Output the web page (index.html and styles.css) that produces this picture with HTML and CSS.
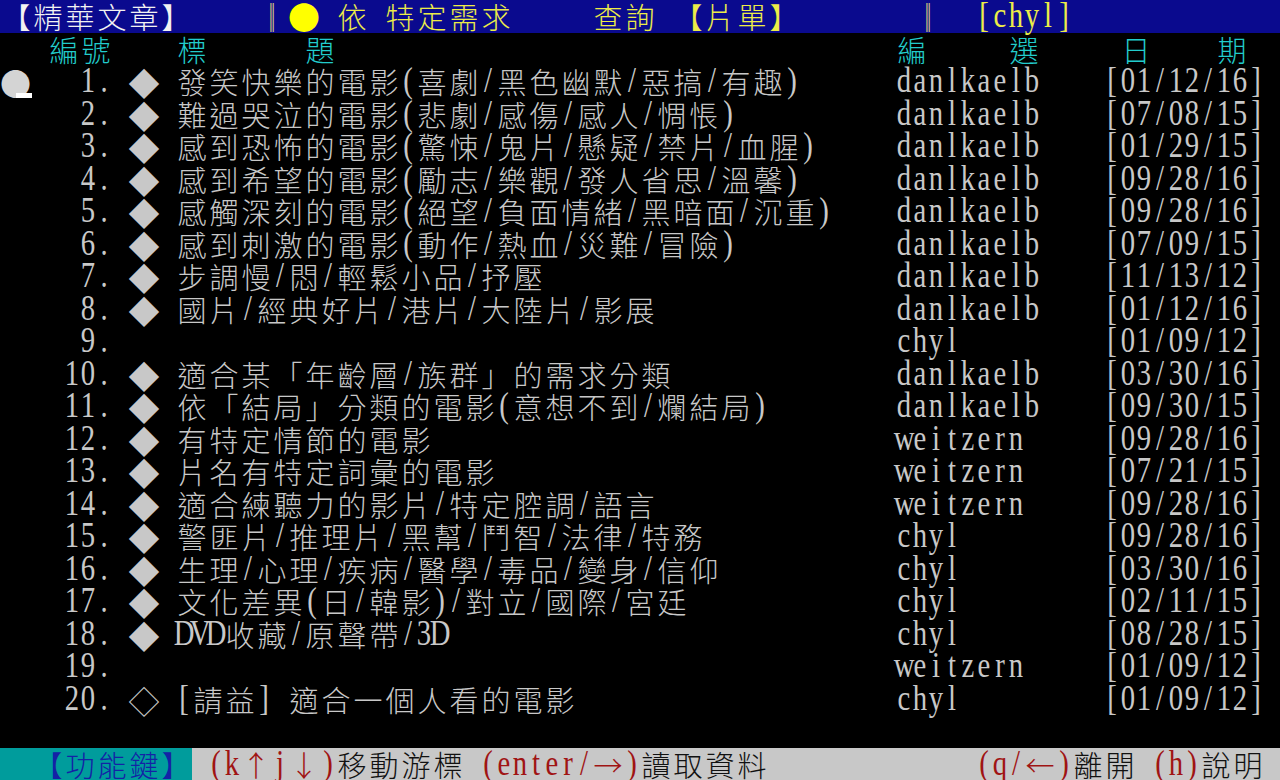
FILE: index.html
```html
<!DOCTYPE html>
<html lang="zh-Hant">
<head>
    <meta charset="UTF-8">
    <meta name="viewport" content="width=device-width, initial-scale=1.0">
    <title>精華文章 - 片單</title>
    <link rel="stylesheet" href="styles.css">
</head>
<body>
    <div class="term">
        <div class="row top-bar"><span class="seg fg-white">【精華文章】    </span><span class="seg fg-bar">║</span><span class="seg fg-yellow"><span class="dot">●</span> 依 特定需求     查詢 【片單】       </span><span class="seg fg-bar">║</span><span class="seg fg-yellow">  [chyl]</span></div>

        <div class="row head"><span class="col-num">編號</span><span class="col-mark"></span><span class="col-title">標      題</span><span class="col-author">編     選</span><span class="col-date"> 日    期</span></div>

        <div class="row"><span class="col-num"><span class="cursor">●</span>1.</span><span class="col-mark">◆</span><span class="col-title">發笑快樂的電影(喜劇/黑色幽默/惡搞/有趣)</span><span class="col-author">danlkaelb</span><span class="col-date">[01/12/16]</span></div>
        <div class="row"><span class="col-num">2.</span><span class="col-mark">◆</span><span class="col-title">難過哭泣的電影(悲劇/感傷/感人/惆悵)</span><span class="col-author">danlkaelb</span><span class="col-date">[07/08/15]</span></div>
        <div class="row"><span class="col-num">3.</span><span class="col-mark">◆</span><span class="col-title">感到恐怖的電影(驚悚/鬼片/懸疑/禁片/血腥)</span><span class="col-author">danlkaelb</span><span class="col-date">[01/29/15]</span></div>
        <div class="row"><span class="col-num">4.</span><span class="col-mark">◆</span><span class="col-title">感到希望的電影(勵志/樂觀/發人省思/溫馨)</span><span class="col-author">danlkaelb</span><span class="col-date">[09/28/16]</span></div>
        <div class="row"><span class="col-num">5.</span><span class="col-mark">◆</span><span class="col-title">感觸深刻的電影(絕望/負面情緒/黑暗面/沉重)</span><span class="col-author">danlkaelb</span><span class="col-date">[09/28/16]</span></div>
        <div class="row"><span class="col-num">6.</span><span class="col-mark">◆</span><span class="col-title">感到刺激的電影(動作/熱血/災難/冒險)</span><span class="col-author">danlkaelb</span><span class="col-date">[07/09/15]</span></div>
        <div class="row"><span class="col-num">7.</span><span class="col-mark">◆</span><span class="col-title">步調慢/悶/輕鬆小品/抒壓</span><span class="col-author">danlkaelb</span><span class="col-date">[11/13/12]</span></div>
        <div class="row"><span class="col-num">8.</span><span class="col-mark">◆</span><span class="col-title">國片/經典好片/港片/大陸片/影展</span><span class="col-author">danlkaelb</span><span class="col-date">[01/12/16]</span></div>
        <div class="row"><span class="col-num">9.</span><span class="col-mark"></span><span class="col-title"></span><span class="col-author">chyl</span><span class="col-date">[01/09/12]</span></div>
        <div class="row"><span class="col-num">10.</span><span class="col-mark">◆</span><span class="col-title">適合某「年齡層/族群」的需求分類</span><span class="col-author">danlkaelb</span><span class="col-date">[03/30/16]</span></div>
        <div class="row"><span class="col-num">11.</span><span class="col-mark">◆</span><span class="col-title">依「結局」分類的電影(意想不到/爛結局)</span><span class="col-author">danlkaelb</span><span class="col-date">[09/30/15]</span></div>
        <div class="row"><span class="col-num">12.</span><span class="col-mark">◆</span><span class="col-title">有特定情節的電影</span><span class="col-author">weitzern</span><span class="col-date">[09/28/16]</span></div>
        <div class="row"><span class="col-num">13.</span><span class="col-mark">◆</span><span class="col-title">片名有特定詞彙的電影</span><span class="col-author">weitzern</span><span class="col-date">[07/21/15]</span></div>
        <div class="row"><span class="col-num">14.</span><span class="col-mark">◆</span><span class="col-title">適合練聽力的影片/特定腔調/語言</span><span class="col-author">weitzern</span><span class="col-date">[09/28/16]</span></div>
        <div class="row"><span class="col-num">15.</span><span class="col-mark">◆</span><span class="col-title">警匪片/推理片/黑幫/鬥智/法律/特務</span><span class="col-author">chyl</span><span class="col-date">[09/28/16]</span></div>
        <div class="row"><span class="col-num">16.</span><span class="col-mark">◆</span><span class="col-title">生理/心理/疾病/醫學/毒品/變身/信仰</span><span class="col-author">chyl</span><span class="col-date">[03/30/16]</span></div>
        <div class="row"><span class="col-num">17.</span><span class="col-mark">◆</span><span class="col-title">文化差異(日/韓影)/對立/國際/宮廷</span><span class="col-author">chyl</span><span class="col-date">[02/11/15]</span></div>
        <div class="row"><span class="col-num">18.</span><span class="col-mark">◆</span><span class="col-title">DVD收藏/原聲帶/3D</span><span class="col-author">chyl</span><span class="col-date">[08/28/15]</span></div>
        <div class="row"><span class="col-num">19.</span><span class="col-mark"></span><span class="col-title"></span><span class="col-author">weitzern</span><span class="col-date">[01/09/12]</span></div>
        <div class="row"><span class="col-num">20.</span><span class="col-mark">◇</span><span class="col-title">[請益] 適合一個人看的電影</span><span class="col-author">chyl</span><span class="col-date">[01/09/12]</span></div>

        <div class="row"></div>

        <div class="row bottom-bar"><span class="seg key-label">  【功能鍵】</span><span class="seg hint"> <b>(k↑j↓)</b>移動游標 <b>(enter/→)</b>讀取資料</span><span class="seg hint hint-right"><b>(q/←)</b>離開 <b>(h)</b>說明 </span></div>
    </div>

    <script src="script.js"></script>
</body>
</html>
```

FILE: styles.css
```css
*,
*::after,
*::before {
    box-sizing: border-box;
}
body {
    margin: 0;
    background: #000;
    overflow: hidden;
}
.term {
    width: 1280px;
    height: 780px;
    color: #c8c8c8;
    font-family: "Liberation Serif", serif;
}
.row {
    display: flex;
    height: 32.5px;
}
.row span,
.row b {
    display: flex;
    white-space: pre;
    font-weight: normal;
}

/* one terminal cell: 16px half width, 32px full width */
.ch {
    width: 16px;
    height: 32.5px;
    justify-content: center;
    font-size: 35px;
    line-height: 32.5px;
    transform: scaleX(0.82);
}
.ch.wide {
    width: 32px;
    font-family: "Noto Sans CJK TC", sans-serif;
    font-size: 29px;
    font-weight: 300;
    line-height: 33px;
    transform: none;
}

/* list columns, in cells */
.col-num {
    width: 112px;
    justify-content: flex-end;
}
.col-mark {
    width: 64px;
    padding-left: 16px;
}
.col-mark .wide {
    font-size: 31px;
}
.col-title {
    width: 720px;
}
.col-author {
    width: 208px;
}
.col-date {
    width: 176px;
}
.head {
    color: #22cccc;
}
.cursor {
    margin-right: auto;
    position: relative;
    color: #d4d4d4;
}
.cursor .wide {
    font-size: 31px;
    justify-content: flex-start;
}
.cursor::after {
    content: "";
    position: absolute;
    left: 16px;
    bottom: 0;
    width: 16px;
    height: 5px;
    background: #fff;
}

/* title bar */
.top-bar {
    background: #0a0a8e;
}
.fg-white {
    color: #f2f2f2;
}
.fg-yellow {
    color: #ecec48;
}
.fg-bar {
    color: #c8bc80;
}
.dot {
    color: #ffff00;
}
.dot .wide {
    font-size: 32px;
}

/* function key bar */
.bottom-bar {
    background: #c8c8c8;
    color: #111;
}
.key-label {
    background: #009c9c;
    color: #1422a6;
}
.hint b {
    color: #a01414;
}
.hint-right {
    margin-left: auto;
}
```

FILE: script.js
```js
// split every text into terminal cells (ascii = 1 column, others = 2)
const term = document.querySelector(".term");

function toCells(node) {
    const frag = document.createDocumentFragment();
    for (const ch of node.nodeValue) {
        const cell = document.createElement("span");
        cell.className = ch.charCodeAt(0) > 0x7f ? "ch wide" : "ch";
        cell.textContent = ch;
        frag.appendChild(cell);
    }
    node.replaceWith(frag);
}

const walker = document.createTreeWalker(term, NodeFilter.SHOW_TEXT);
const texts = [];
while (walker.nextNode()) {
    const parent = walker.currentNode.parentNode;
    if (parent === term || parent.classList.contains("row")) continue;
    texts.push(walker.currentNode);
}
texts.forEach(toCells);
```
